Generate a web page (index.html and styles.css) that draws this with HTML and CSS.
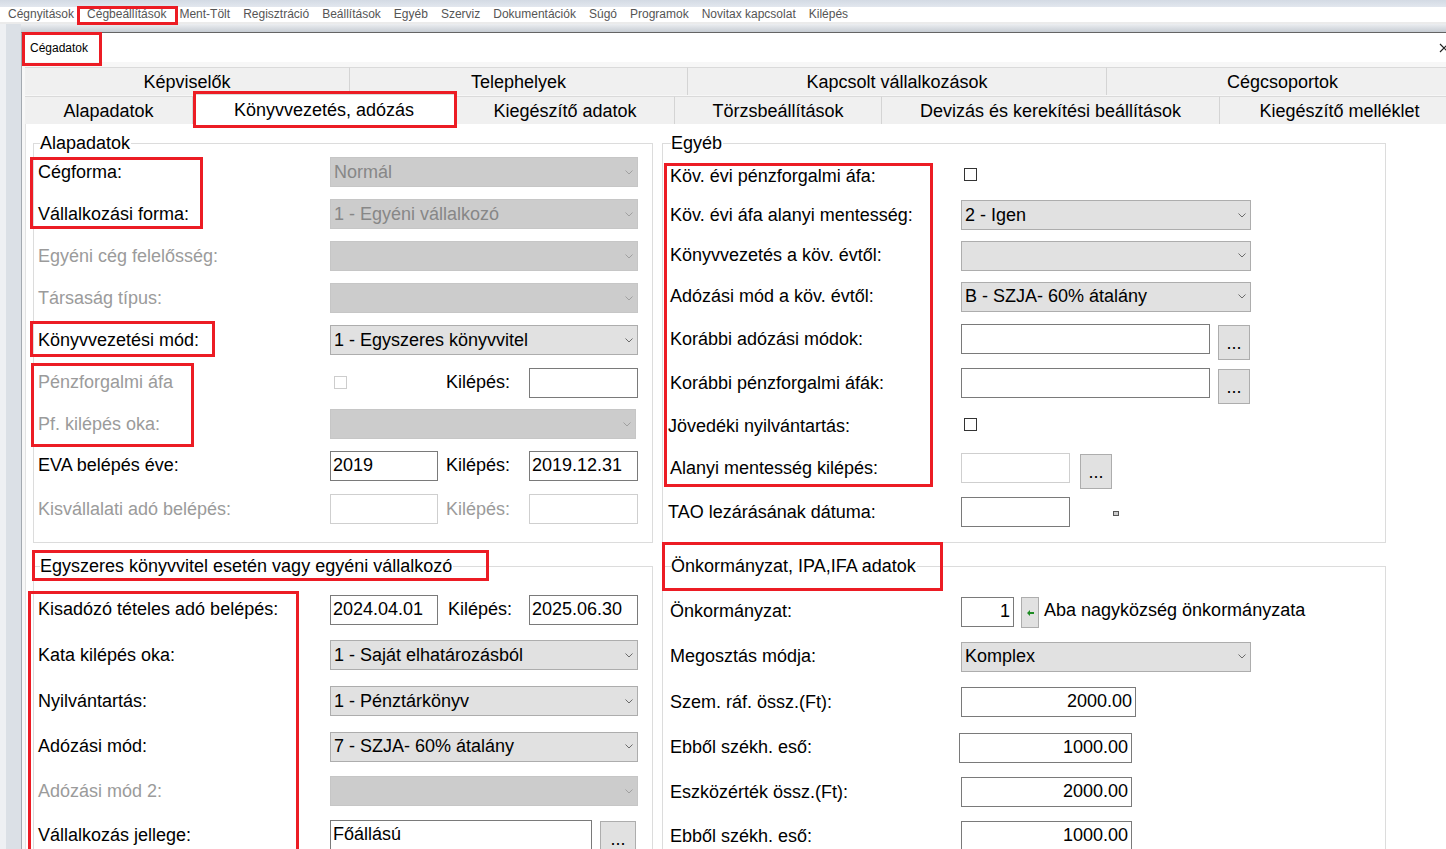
FILE: index.html
```html
<!DOCTYPE html>
<html lang="hu">
<head>
<meta charset="utf-8">
<title>Cégadatok</title>
<link rel="stylesheet" href="styles.css">
</head>
<body>
<div class="topband"></div>
<nav class="menubar">
  <span>Cégnyitások</span><span>Cégbeállítások</span><span>Ment-Tölt</span><span>Regisztráció</span><span>Beállítások</span><span>Egyéb</span><span>Szerviz</span><span>Dokumentációk</span><span>Súgó</span><span>Programok</span><span>Novitax kapcsolat</span><span>Kilépés</span>
</nav>
<div class="menusep"></div>
<div class="frame">
  <div class="window">
    <div class="titlebar">
      <span class="title">Cégadatok</span>
      <svg class="close" width="10" height="10" viewBox="0 0 10 10"><path d="M1 1 L9 9 M9 1 L1 9" stroke="#222" stroke-width="1.2" fill="none"/></svg>
    </div>
    <div class="winbody">
      <div class="tabrow">
        <div class="tab w325">Képviselők</div>
        <div class="tab w338">Telephelyek</div>
        <div class="tab w419">Kapcsolt vállalkozások</div>
        <div class="tab w352">Cégcsoportok</div>
      </div>
      <div class="tabrow second">
        <div class="tab w168">Alapadatok</div>
        <div class="tab w263 active">Könyvvezetés, adózás</div>
        <div class="tab w219">Kiegészítő adatok</div>
        <div class="tab w207">Törzsbeállítások</div>
        <div class="tab w338">Devizás és kerekítési beállítások</div>
        <div class="tab w240">Kiegészítő melléklet</div>
      </div>
      <div class="panel">
        <div class="grid">
          <!-- Alapadatok -->
          <section class="group gl">
            <div class="legend">Alapadatok</div>
            <div class="rows rows-l1">
              <div class="row"><span class="lbl">Cégforma:</span><div class="sel dis w308"><span>Normál</span><svg class="chev" width="8" height="5" viewBox="0 0 8 5"><path d="M0.5 0.5 L4 4 L7.5 0.5"/></svg></div></div>
              <div class="row"><span class="lbl">Vállalkozási forma:</span><div class="sel dis w308"><span>1 - Egyéni vállalkozó</span><svg class="chev" width="8" height="5" viewBox="0 0 8 5"><path d="M0.5 0.5 L4 4 L7.5 0.5"/></svg></div></div>
              <div class="row"><span class="lbl muted">Egyéni cég felelősség:</span><div class="sel dis w308"><span></span><svg class="chev" width="8" height="5" viewBox="0 0 8 5"><path d="M0.5 0.5 L4 4 L7.5 0.5"/></svg></div></div>
              <div class="row"><span class="lbl muted">Társaság típus:</span><div class="sel dis w308"><span></span><svg class="chev" width="8" height="5" viewBox="0 0 8 5"><path d="M0.5 0.5 L4 4 L7.5 0.5"/></svg></div></div>
              <div class="row"><span class="lbl">Könyvvezetési mód:</span><div class="sel w308"><span>1 - Egyszeres könyvvitel</span><svg class="chev" width="8" height="5" viewBox="0 0 8 5"><path d="M0.5 0.5 L4 4 L7.5 0.5"/></svg></div></div>
              <div class="row h43"><span class="lbl muted">Pénzforgalmi áfa</span>
                <div class="pair"><div class="cell1"><span class="chk dis"></span></div><span class="kil">Kilépés:</span><div class="inp w109"></div></div>
              </div>
              <div class="row h40"><span class="lbl muted">Pf. kilépés oka:</span><div class="sel dis w306"><span></span><svg class="chev" width="8" height="5" viewBox="0 0 8 5"><path d="M0.5 0.5 L4 4 L7.5 0.5"/></svg></div></div>
              <div class="row h43"><span class="lbl">EVA belépés éve:</span>
                <div class="pair"><div class="inp w108">2019</div><span class="kil">Kilépés:</span><div class="inp w109">2019.12.31</div></div>
              </div>
              <div class="row h44"><span class="lbl muted">Kisvállalati adó belépés:</span>
                <div class="pair"><div class="inp dis w108"></div><span class="kil muted">Kilépés:</span><div class="inp dis w109"></div></div>
              </div>
            </div>
          </section>

          <!-- Egyéb -->
          <section class="group gr">
            <div class="legend">Egyéb</div>
            <div class="rows rows-r1">
              <div class="row h38"><span class="lbl">Köv. évi pénzforgalmi áfa:</span><span class="chk"></span></div>
              <div class="row h40"><span class="lbl">Köv. évi áfa alanyi mentesség:</span><div class="sel w290"><span>2 - Igen</span><svg class="chev" width="8" height="5" viewBox="0 0 8 5"><path d="M0.5 0.5 L4 4 L7.5 0.5"/></svg></div></div>
              <div class="row h41"><span class="lbl">Könyvvezetés a köv. évtől:</span><div class="sel w290"><span></span><svg class="chev" width="8" height="5" viewBox="0 0 8 5"><path d="M0.5 0.5 L4 4 L7.5 0.5"/></svg></div></div>
              <div class="row h41"><span class="lbl">Adózási mód a köv. évtől:</span><div class="sel w290"><span>B - SZJA- 60% átalány</span><svg class="chev" width="8" height="5" viewBox="0 0 8 5"><path d="M0.5 0.5 L4 4 L7.5 0.5"/></svg></div></div>
              <div class="row h44"><span class="lbl">Korábbi adózási módok:</span><div class="ctlgrp"><div class="inp w249"></div><div class="btn">...</div></div></div>
              <div class="row h44"><span class="lbl">Korábbi pénzforgalmi áfák:</span><div class="ctlgrp"><div class="inp w249"></div><div class="btn">...</div></div></div>
              <div class="row"><span class="lbl shift">Jövedéki nyilvántartás:</span><span class="chk"></span></div>
              <div class="row"><span class="lbl">Alanyi mentesség kilépés:</span><div class="ctlgrp"><div class="inp dis w109"></div><div class="btn gap10">...</div></div></div>
              <div class="row h46"><span class="lbl shift">TAO lezárásának dátuma:</span><div class="ctlgrp"><div class="inp w109"></div><svg class="tiny" width="6" height="5" viewBox="0 0 6 5"><rect x="0.5" y="0.5" width="5" height="4" fill="#fff" stroke="#555"/><path d="M2 1 V4 M4 1 V4" stroke="#999"/></svg></div></div>
            </div>
          </section>

          <!-- Egyszeres könyvvitel -->
          <section class="group gl">
            <div class="legend">Egyszeres könyvvitel esetén vagy egyéni vállalkozó</div>
            <div class="rows rows-l2">
              <div class="row r45"><span class="lbl">Kisadózó tételes adó belépés:</span>
                <div class="pair"><div class="inp w108">2024.04.01</div><span class="kil k2">Kilépés:</span><div class="inp w109">2025.06.30</div></div>
              </div>
              <div class="row r46"><span class="lbl">Kata kilépés oka:</span><div class="sel w308"><span>1 - Saját elhatározásból</span><svg class="chev" width="8" height="5" viewBox="0 0 8 5"><path d="M0.5 0.5 L4 4 L7.5 0.5"/></svg></div></div>
              <div class="row r46"><span class="lbl">Nyilvántartás:</span><div class="sel w308"><span>1 - Pénztárkönyv</span><svg class="chev" width="8" height="5" viewBox="0 0 8 5"><path d="M0.5 0.5 L4 4 L7.5 0.5"/></svg></div></div>
              <div class="row r45"><span class="lbl">Adózási mód:</span><div class="sel w308"><span>7 - SZJA- 60% átalány</span><svg class="chev" width="8" height="5" viewBox="0 0 8 5"><path d="M0.5 0.5 L4 4 L7.5 0.5"/></svg></div></div>
              <div class="row r44"><span class="lbl muted">Adózási mód 2:</span><div class="sel dis w308"><span></span><svg class="chev" width="8" height="5" viewBox="0 0 8 5"><path d="M0.5 0.5 L4 4 L7.5 0.5"/></svg></div></div>
              <div class="row r44"><span class="lbl">Vállalkozás jellege:</span><div class="ctlgrp"><div class="inp w262">Főállású</div><div class="btn wide">...</div></div></div>
            </div>
          </section>

          <!-- Önkormányzat -->
          <section class="group gr">
            <div class="legend">Önkormányzat, IPA,IFA adatok</div>
            <div class="rows rows-r2">
              <div class="row r45"><span class="lbl">Önkormányzat:</span>
                <div class="ctlgrp mid"><div class="inp num w53">1</div><div class="arrowbtn"><svg width="7" height="6" viewBox="0 0 7 6"><path d="M0 3 L3 0 V2 H7 V4 H3 V6 Z" fill="#1e8c24"/></svg></div><span class="onk">Aba nagyközség önkormányzata</span></div>
              </div>
              <div class="row r45"><span class="lbl">Megosztás módja:</span><div class="sel w290"><span>Komplex</span><svg class="chev" width="8" height="5" viewBox="0 0 8 5"><path d="M0.5 0.5 L4 4 L7.5 0.5"/></svg></div></div>
              <div class="row r46"><span class="lbl">Szem. ráf. össz.(Ft):</span><div class="inp num w175">2000.00</div></div>
              <div class="row r45"><span class="lbl">Ebből székh. eső:</span><div class="inp num w173 left2">1000.00</div></div>
              <div class="row r44"><span class="lbl">Eszközérték össz.(Ft):</span><div class="inp num w171">2000.00</div></div>
              <div class="row r44"><span class="lbl">Ebből székh. eső:</span><div class="inp num w171">1000.00</div></div>
            </div>
          </section>
        </div>
      </div>
    </div>
  </div>
</div>

<div class="mark m-menu"></div>
<div class="mark m-title"></div>
<div class="mark m-tab"></div>
<div class="mark m-forma"></div>
<div class="mark m-konyv"></div>
<div class="mark m-penz"></div>
<div class="mark m-egyeb"></div>
<div class="mark m-egysz"></div>
<div class="mark m-onk"></div>
<div class="mark m-kisado"></div>
</body>
</html>
```

FILE: styles.css
```css
* { box-sizing: border-box; }
html, body { margin: 0; padding: 0; }
body {
  width: 1446px;
  height: 849px;
  overflow: hidden;
  position: relative;
  background: #fff;
  color: #000;
  font-family: "Liberation Sans", Arial, sans-serif;
}

/* top strip and menu */
.topband { height: 7px; background: linear-gradient(#d3dae4, #e2e7ee); }
.menubar {
  height: 15px;
  display: flex;
  gap: 13px;
  padding-left: 8px;
  font-size: 12px;
  line-height: 15px;
  color: #555;
  background: #fff;
  white-space: nowrap;
}
.menusep { height: 2px; background: #ebebeb; }

.frame {
  height: 825px;
  padding-top: 8px;
  background: linear-gradient(to right, #eef0f3 0, #eef0f3 6px, #dbe0e6 6px, #dbe0e6 21px);
  position: relative;
}
.frame::before {
  content: "";
  display: block;
  position: absolute;
  left: 21px; right: 0; top: 0;
  height: 8px;
  background: linear-gradient(#eceef1, #c6ccd3);
}

.window {
  width: 1442px;
  height: 817px;
  margin-left: 21px;
  border-top: 1px solid #646464;
  border-left: 1px solid #a3a9b0;
  background: #f7f7f7;
  display: flex;
  flex-direction: column;
  position: relative;
}
.titlebar {
  height: 29px;
  flex: none;
  background: #fff;
  display: flex;
  align-items: center;
  justify-content: space-between;
  padding-left: 8px;
  font-size: 12px;
}
.close { margin-top: 1px; margin-right: 14px; }

.winbody {
  padding: 5px 0 0 3px;
  display: flex;
  flex-direction: column;
  flex: 1;
}

/* tabs */
.tabrow { display: flex; height: 28px; flex: none; }
.tabrow.second { margin-top: 1px; }
.tab {
  flex: none;
  height: 28px;
  background: #f0f0f0;
  border-top: 1px solid #dadada;
  border-right: 1px solid #d4d4d4;
  font-size: 18px;
  line-height: 29px;
  text-align: center;
  white-space: nowrap;
}
.tab.active { background: #fff; margin-top: -2px; height: 30px; line-height: 31px; }
.w325 { width: 325px; }
.w338 { width: 338px; }
.w419 { width: 419px; }
.w352 { width: 352px; }
.w168 { width: 168px; }
.w263 { width: 263px; }
.w219 { width: 219px; }
.w207 { width: 207px; }
.w240 { width: 240px; }

/* content panel */
.panel {
  flex: 1;
  background: #fff;
  border-left: 1px solid #e3e3e3;
  padding: 19px 0 0 7px;
}
.grid {
  display: grid;
  grid-template-columns: 620px 724px;
  column-gap: 9px;
  row-gap: 23px;
}
.group { border: 1px solid #dcdcdc; }
.legend {
  width: max-content;
  height: 20px;
  line-height: 20px;
  margin: -11px 0 0 6px;
  padding: 0 1px 0 0;
  background: #fff;
  font-size: 18px;
  white-space: nowrap;
}
.gr .legend { margin-left: 8px; }

.rows { display: flex; flex-direction: column; }
.gl .rows { padding-left: 4px; }
.gr .rows { padding-left: 7px; }
.rows-l1 { margin-top: -2px; padding-bottom: 11px; }
.rows-r1 { margin-top: 4px; }
.rows-l2 { margin-top: 11px; }
.rows-r2 { margin-top: 13px; }

.row {
  height: 42px;
  display: flex;
  align-items: center;
  font-size: 18px;
  white-space: nowrap;
}
.row.h38 { height: 38px; }
.row.h40 { height: 40px; }
.row.h41 { height: 41px; }
.row.h43 { height: 43px; }
.row.h44 { height: 44px; }
.row.h46 { height: 46px; }
.row.r44 { height: 44px; }
.row.r45 { height: 45px; }
.row.r46 { height: 46px; }

.lbl { flex: none; }
.gl .lbl { width: 292px; }
.gr .lbl { width: 291px; }
.lbl.shift { margin-left: -2px; margin-right: 2px; }
.muted { color: #9b9b9b; }

/* controls */
.sel {
  height: 30px;
  flex: none;
  display: flex;
  align-items: center;
  justify-content: space-between;
  padding: 0 4px 0 3px;
  background: #e1e1e1;
  border: 1px solid #adadad;
  color: #000;
}
.sel.dis { background: #cccccc; border-color: #c6c6c6; color: #878787; }
.chev path { fill: none; stroke: #6b6b6b; stroke-width: 1; }
.sel.dis .chev path { stroke: #a0a0a0; }
.w308 { width: 308px; }
.w306 { width: 306px; }
.w290 { width: 290px; }

.inp {
  height: 30px;
  flex: none;
  background: #fff;
  border: 1px solid #7a7a7a;
  padding-left: 2px;
  line-height: 27px;
}
.inp.dis { border-color: #cfcfcf; }
.inp.num { text-align: right; padding-right: 3px; padding-left: 0; }
.w108 { width: 108px; }
.w109 { width: 109px; }
.w249 { width: 249px; }
.w262 { width: 262px; }
.w53 { width: 53px; }
.w175 { width: 175px; }
.w173 { width: 173px; }
.w171 { width: 171px; }
.left2 { margin-left: -2px; }

.pair { display: flex; align-items: center; width: 308px; }
.cell1 { width: 108px; height: 30px; display: flex; align-items: center; padding-left: 4px; }
.kil { width: 91px; padding-left: 8px; }
.kil.k2 { padding-left: 10px; }

.chk {
  width: 13px;
  height: 13px;
  flex: none;
  border: 1px solid #333;
  background: #fff;
  margin-left: 3px;
  margin-top: -3px;
}
.chk.dis { border-color: #cdcdcd; margin-left: 0; margin-top: 0; }

.ctlgrp { display: flex; align-items: flex-start; }
.ctlgrp.mid { align-items: center; }
.btn {
  width: 32px;
  height: 35px;
  flex: none;
  margin: 1px 0 -6px 8px;
  padding-top: 6px;
  background: #e1e1e1;
  border: 1px solid #adadad;
  display: flex;
  justify-content: center;
  align-items: flex-start;
  line-height: 22px;
  font-size: 18px;
}
.btn.gap10 { margin-left: 10px; }
.btn.wide { width: 36px; }
.tiny { margin: 14px 0 0 43px; }

.arrowbtn {
  width: 18px;
  height: 31px;
  flex: none;
  margin-left: 7px;
  margin-top: 2px;
  background: #e1e1e1;
  border: 1px solid #adadad;
  display: flex;
  align-items: center;
  justify-content: center;
}
.onk { margin-left: 5px; margin-top: -3px; }

/* red annotation boxes drawn over the screenshot */
.mark { position: absolute; border: 3px solid #ec1c24; pointer-events: none; }
.m-menu { left: 77px; top: 6px; width: 101px; height: 19px; }
.m-title { left: 22px; top: 32px; width: 80px; height: 34px; }
.m-tab { left: 193px; top: 91px; width: 264px; height: 37px; }
.m-forma { left: 30px; top: 157px; width: 173px; height: 72px; }
.m-konyv { left: 30px; top: 321px; width: 185px; height: 36px; }
.m-penz { left: 31px; top: 363px; width: 163px; height: 84px; }
.m-egyeb { left: 664px; top: 163px; width: 269px; height: 324px; }
.m-egysz { left: 32px; top: 550px; width: 457px; height: 31px; }
.m-onk { left: 662px; top: 542px; width: 281px; height: 49px; }
.m-kisado { left: 28px; top: 591px; width: 271px; height: 270px; }
```
